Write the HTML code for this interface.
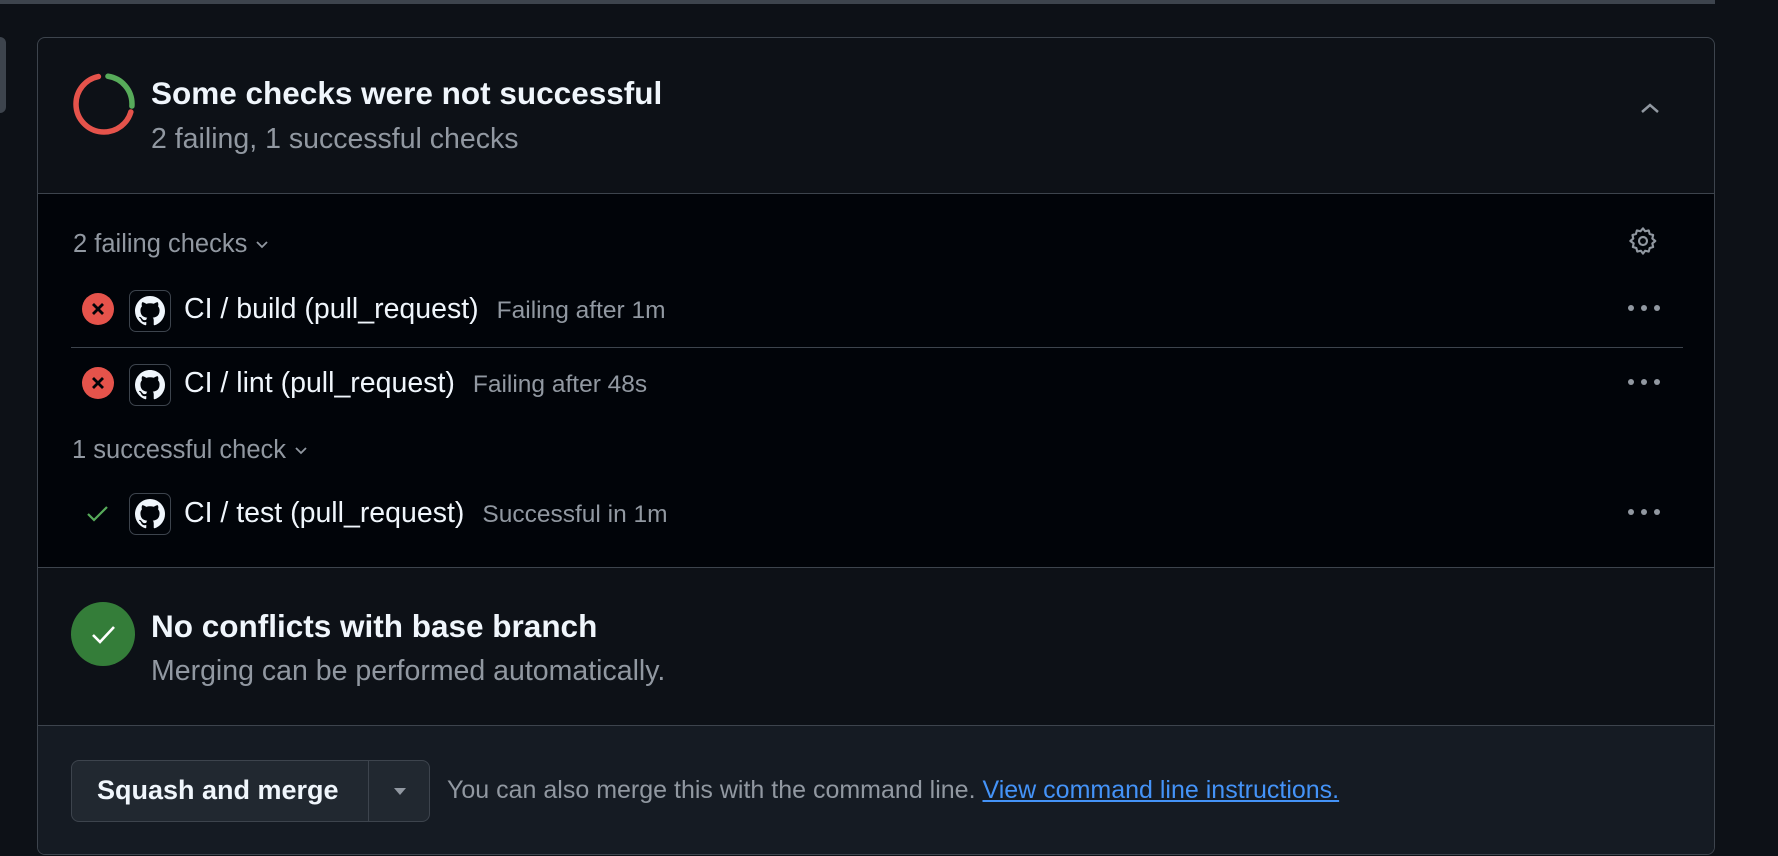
<!DOCTYPE html>
<html><head><meta charset="utf-8"><style>
*{box-sizing:border-box;margin:0;padding:0}
body{width:1778px;height:856px;background:#0d1117;font-family:"Liberation Sans",sans-serif;position:relative;overflow:hidden;color:#f0f6fc}
.abs{position:absolute}
.topbar{left:0;top:0;width:1715px;height:4px;background:#3d444d}
.leftbit{left:-6px;top:37px;width:12px;height:76px;border-radius:6px;background:#3d444d}
.panel{left:37px;top:37px;width:1678px;height:818px;border:1px solid #3d444d;border-radius:8px;overflow:hidden;background:#0d1117}
.body{position:absolute;left:0;top:155px;width:100%;height:375px;background:#010409;border-top:1px solid #3d444d;border-bottom:1px solid #3d444d}
.footer{position:absolute;left:0;top:687px;width:100%;height:129px;background:#151b23;border-top:1px solid #3d444d}
.t{position:absolute;white-space:nowrap}
.muted{color:#9198a1}
.gh{position:absolute;width:42px;height:42px;border:1px solid #3d444d;border-radius:7px;background:#010409}
.gh svg{position:absolute;left:5px;top:5px}
.x{position:absolute;width:32px;height:32px;border-radius:50%;background:#e5534b}
.dots{position:absolute;width:36px;height:6px}
.dots i{position:absolute;top:0;width:6px;height:6px;border-radius:50%;background:#9198a1}
.row{position:absolute;left:146px;height:40px;display:flex;align-items:center;white-space:nowrap}
.row .n{font-size:28.5px}
.row .s{font-size:24.5px;color:#9198a1;margin-left:18px;padding-top:3px}
</style></head><body>
<div class="abs topbar"></div>
<div class="abs leftbit"></div>
<div class="abs panel">
  <svg class="abs" style="left:34px;top:34px" width="64" height="64" viewBox="0 0 64 64">
    <circle cx="32" cy="32" r="28" fill="none" stroke="#e5534b" stroke-width="5.5" stroke-dasharray="118 200" stroke-dashoffset="-52" transform="rotate(-90 32 32)" stroke-linecap="round"/>
    <circle cx="32" cy="32" r="28" fill="none" stroke="#57ab5a" stroke-width="5.5" stroke-dasharray="42 200" stroke-dashoffset="-4" transform="rotate(-90 32 32)" stroke-linecap="round"/>
  </svg>
  <div class="t" style="left:113px;top:37px;font-size:31.5px;font-weight:bold">Some checks were not successful</div>
  <div class="t muted" style="left:113px;top:85px;font-size:28.5px">2 failing, 1 successful checks</div>
  <svg class="abs" style="left:1600px;top:58px" width="24" height="24" viewBox="0 0 24 24"><path d="M4 16l8-7 8 7" fill="none" stroke="#9198a1" stroke-width="2.5"/></svg>

  <div class="body">
    <div class="t muted" style="left:35px;top:36px;font-size:25.5px">2 failing checks <svg width="16" height="16" viewBox="0 0 16 16" style="vertical-align:0px"><path d="M3 6l5 5 5-5" fill="none" stroke="#9198a1" stroke-width="1.8"/></svg></div>
    <svg class="abs" style="left:1589px;top:31px" width="32" height="32" viewBox="0 0 24 24"><path d="M12 2.5l1.6 2.2 2.7-.6.7 2.6 2.6.8-.6 2.7 2.2 1.8-2.2 1.8.6 2.7-2.6.8-.7 2.6-2.7-.6L12 21.5l-1.6-2.2-2.7.6-.7-2.6-2.6-.8.6-2.7L2.5 12l2.2-1.8-.6-2.7 2.6-.8.7-2.6 2.7.6z" fill="none" stroke="#9198a1" stroke-width="1.6" stroke-linejoin="round"/><circle cx="12" cy="12" r="3" fill="none" stroke="#9198a1" stroke-width="1.6"/></svg>

    <div class="x" style="left:44px;top:99px"><svg width="32" height="32"><path d="M11 11l10 10M21 11l-10 10" stroke="#010409" stroke-width="2.8"/></svg></div>
    <div class="gh" style="left:91px;top:96px"><svg width="30" height="30" viewBox="0 0 16 16"><path fill="#f0f6fc" d="M8 0C3.58 0 0 3.58 0 8c0 3.54 2.29 6.53 5.47 7.59.4.07.55-.17.55-.38v-1.33c-2.23.48-2.7-1.07-2.7-1.07-.36-.92-.89-1.17-.89-1.17-.73-.5.05-.49.05-.49.8.06 1.23.83 1.23.83.71 1.23 1.87.87 2.33.67.07-.52.28-.87.5-1.07-1.78-.2-3.64-.89-3.64-3.95 0-.87.31-1.59.83-2.15-.08-.2-.36-1.02.08-2.12 0 0 .67-.21 2.2.82A7.7 7.7 0 0 1 8 3.87c.68 0 1.36.09 2 .27 1.53-1.04 2.2-.82 2.2-.82.44 1.1.16 1.92.08 2.12.51.56.82 1.27.82 2.15 0 3.07-1.87 3.75-3.65 3.95.29.25.54.73.54 1.48v2.2c0 .21.15.46.55.38A8.01 8.01 0 0 0 16 8c0-4.42-3.58-8-8-8z"/></svg></div>
    <div class="row" style="top:95px"><span class="n">CI / build (pull_request)</span><span class="s">Failing after 1m</span></div>
    <div class="dots" style="left:1590px;top:111px"><i style="left:0"></i><i style="left:13px"></i><i style="left:26px"></i></div>

    <div class="abs" style="left:33px;top:153px;width:1612px;height:1px;background:#3d444d"></div>

    <div class="x" style="left:44px;top:173px"><svg width="32" height="32"><path d="M11 11l10 10M21 11l-10 10" stroke="#010409" stroke-width="2.8"/></svg></div>
    <div class="gh" style="left:91px;top:170px"><svg width="30" height="30" viewBox="0 0 16 16"><path fill="#f0f6fc" d="M8 0C3.58 0 0 3.58 0 8c0 3.54 2.29 6.53 5.47 7.59.4.07.55-.17.55-.38v-1.33c-2.23.48-2.7-1.07-2.7-1.07-.36-.92-.89-1.17-.89-1.17-.73-.5.05-.49.05-.49.8.06 1.23.83 1.23.83.71 1.23 1.87.87 2.33.67.07-.52.28-.87.5-1.07-1.78-.2-3.64-.89-3.64-3.95 0-.87.31-1.59.83-2.15-.08-.2-.36-1.02.08-2.12 0 0 .67-.21 2.2.82A7.7 7.7 0 0 1 8 3.87c.68 0 1.36.09 2 .27 1.53-1.04 2.2-.82 2.2-.82.44 1.1.16 1.92.08 2.12.51.56.82 1.27.82 2.15 0 3.07-1.87 3.75-3.65 3.95.29.25.54.73.54 1.48v2.2c0 .21.15.46.55.38A8.01 8.01 0 0 0 16 8c0-4.42-3.58-8-8-8z"/></svg></div>
    <div class="row" style="top:169px"><span class="n">CI / lint (pull_request)</span><span class="s">Failing after 48s</span></div>
    <div class="dots" style="left:1590px;top:185px"><i style="left:0"></i><i style="left:13px"></i><i style="left:26px"></i></div>

    <div class="t muted" style="left:34px;top:242px;font-size:25.5px">1 successful check <svg width="16" height="16" viewBox="0 0 16 16" style="vertical-align:0px"><path d="M3 6l5 5 5-5" fill="none" stroke="#9198a1" stroke-width="1.8"/></svg></div>

    <svg class="abs" style="left:46px;top:306px" width="28" height="28" viewBox="0 0 28 28"><path d="M4 14l6 6 13-13" fill="none" stroke="#57ab5a" stroke-width="2.2"/></svg>
    <div class="gh" style="left:91px;top:299px"><svg width="30" height="30" viewBox="0 0 16 16"><path fill="#f0f6fc" d="M8 0C3.58 0 0 3.58 0 8c0 3.54 2.29 6.53 5.47 7.59.4.07.55-.17.55-.38v-1.33c-2.23.48-2.7-1.07-2.7-1.07-.36-.92-.89-1.17-.89-1.17-.73-.5.05-.49.05-.49.8.06 1.23.83 1.23.83.71 1.23 1.87.87 2.33.67.07-.52.28-.87.5-1.07-1.78-.2-3.64-.89-3.64-3.95 0-.87.31-1.59.83-2.15-.08-.2-.36-1.02.08-2.12 0 0 .67-.21 2.2.82A7.7 7.7 0 0 1 8 3.87c.68 0 1.36.09 2 .27 1.53-1.04 2.2-.82 2.2-.82.44 1.1.16 1.92.08 2.12.51.56.82 1.27.82 2.15 0 3.07-1.87 3.75-3.65 3.950.29.25.54.73.54 1.48v2.2c0 .21.15.46.55.38A8.01 8.01 0 0 0 16 8c0-4.42-3.58-8-8-8z"/></svg></div>
    <div class="row" style="top:299px"><span class="n">CI / test (pull_request)</span><span class="s">Successful in 1m</span></div>
    <div class="dots" style="left:1590px;top:315px"><i style="left:0"></i><i style="left:13px"></i><i style="left:26px"></i></div>
  </div>

  <div class="abs" style="left:33px;top:564px;width:64px;height:64px;border-radius:50%;background:#347d39"><svg width="64" height="64"><path d="M22 33l7 7 14-15" fill="none" stroke="#fff" stroke-width="2.6"/></svg></div>
  <div class="t" style="left:113px;top:570px;font-size:31.5px;font-weight:bold">No conflicts with base branch</div>
  <div class="t muted" style="left:113px;top:617px;font-size:28.5px">Merging can be performed automatically.</div>

  <div class="footer">
    <div class="abs" style="left:33px;top:34px;width:359px;height:62px;border:1px solid #3d444d;border-radius:8px;background:#212830">
      <div class="t" style="left:25px;top:14px;font-size:27px;font-weight:bold;color:#f0f6fc">Squash and merge</div>
      <div class="abs" style="left:296px;top:0;width:1px;height:60px;background:#3d444d"></div>
      <svg class="abs" style="left:320px;top:24px" width="16" height="12"><path d="M2 3h12l-6 7z" fill="#9198a1"/></svg>
    </div>
    <div class="t muted" style="left:409px;top:50px;font-size:25px">You can also merge this with the command line. <span style="color:#4493f8;text-decoration:underline">View command line instructions.</span></div>
  </div>
</div>
</body></html>
